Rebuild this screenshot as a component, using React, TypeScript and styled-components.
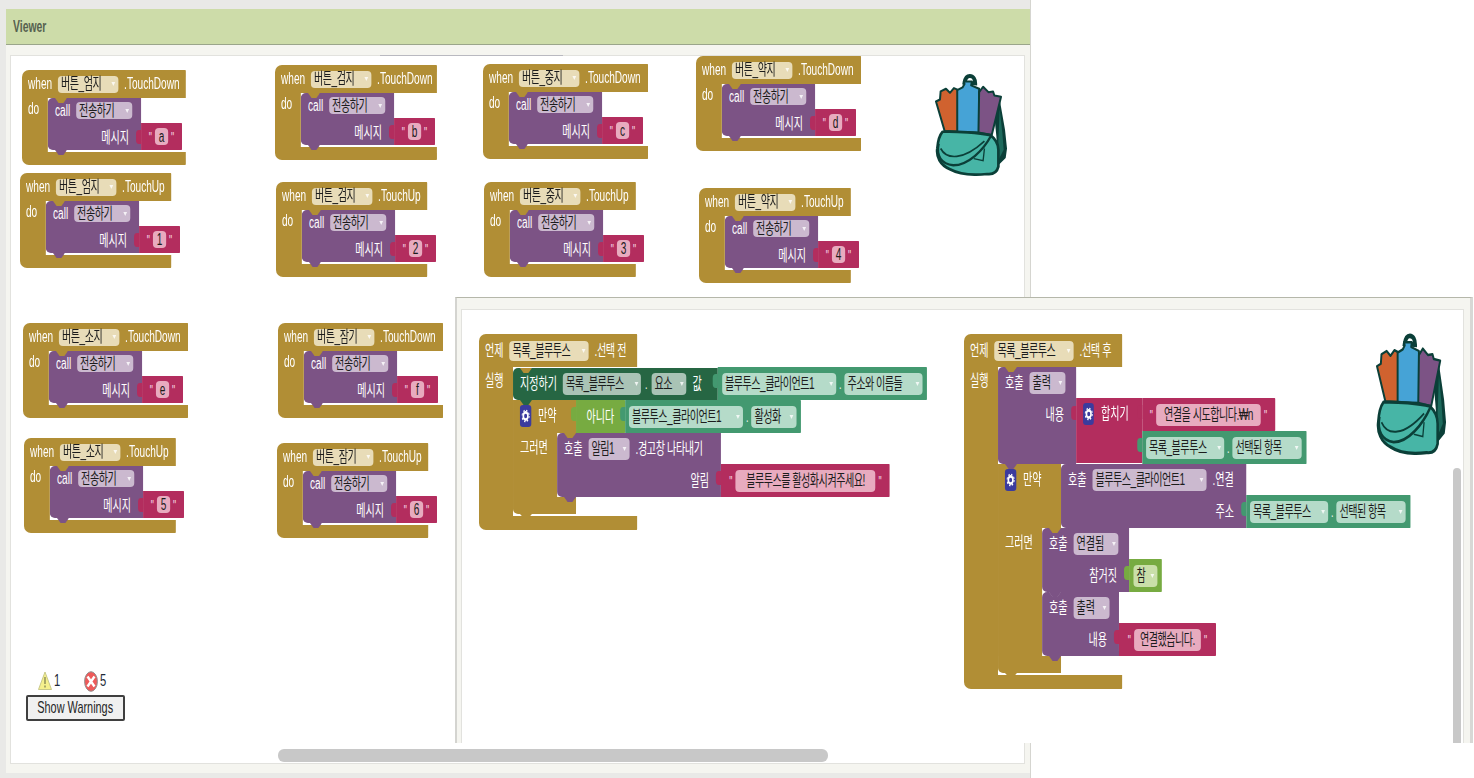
import React from 'react'
import styled, { createGlobalStyle } from 'styled-components'

// the whole reference is squeezed horizontally, blocks get the same squeeze
const K = 0.63
const u = (n: number) => `${n / K}px`

const colors = {
  olive: '#b18e35',
  purple: '#7c5385',
  pink: '#b32d5e',
  setter: '#266643',
  getter: '#439970',
  logic: '#77ab41',
}

const tints: Record<string, string> = {
  olive: '#e8dcb8',
  purple: '#cbb9cf',
  pink: '#e8abbf',
  setter: '#a9c3b5',
  getter: '#b5dbc9',
  logic: '#c9dfa9',
}

const GlobalStyle = createGlobalStyle`
  html, body {
    margin: 0;
    padding: 0;
    background: #fff;
  }
  body {
    font-family: "Liberation Sans", "Noto Sans CJK KR", sans-serif;
  }
`

const Page = styled.div`
  position: relative;
  width: 1474px;
  height: 778px;
  overflow: hidden;
  background: #fff;
  filter: blur(0.45px);
`

const Viewer = styled.section`
  width: 1031px;
  height: 778px;
  box-sizing: border-box;
  padding: 9px 0 5px 6px;
  display: flex;
  flex-direction: column;
  background: #e9e9e7;
  border-right: 1px solid #d5d5d0;
`

const ViewerHeader = styled.header`
  height: 36px;
  flex-shrink: 0;
  display: flex;
  align-items: center;
  padding-left: 7px;
  background: #cddca9;
  border-bottom: 1px solid #9aa58a;
  box-sizing: border-box;
`

const ViewerTitle = styled.span`
  display: inline-block;
  font-size: 16px;
  font-weight: 700;
  color: #566150;
  transform: scaleX(0.65);
  transform-origin: left center;
`

const ViewerPanel = styled.div`
  flex: 1;
  display: flex;
  padding: 10px 5px 9px 4px;
  background: #f5f5f0;
`

const Canvas = styled.div`
  position: relative;
  flex: 1;
  background: #fff;
  border: 1px solid #e2e2de;
`

const TopMark = styled.div`
  position: absolute;
  left: 369px;
  top: -1px;
  width: 183px;
  height: 1px;
  background: #b9b9c0;
`

const HScroll = styled.div`
  position: absolute;
  left: 267px;
  top: 693px;
  width: 550px;
  height: 13px;
  border-radius: 6px;
  background: #c8c8c8;
`

const VScroll = styled.div`
  position: absolute;
  right: 2px;
  top: 158px;
  bottom: 0;
  width: 8px;
  border-radius: 4px 4px 0 0;
  background: #c8c8c8;
`

const WarningBox = styled.div`
  position: absolute;
  left: 15px;
  top: 614px;
  width: 99px;
  display: flex;
  flex-direction: column;
  gap: 3px;
`

const WarningRow = styled.div`
  display: flex;
  align-items: center;
  height: 22px;
  padding-left: 12px;
`

const Count = styled.span<{ $gap: number }>`
  display: inline-block;
  width: ${(p) => p.$gap}px;
  padding-left: 3px;
  box-sizing: border-box;
  font-size: 16px;
  color: #1e2a38;
  transform: scaleX(0.7);
  transform-origin: left center;
`

const WarnButton = styled.button`
  height: 26px;
  padding: 0;
  display: flex;
  align-items: center;
  justify-content: center;
  font: 17px "Liberation Sans", sans-serif;
  color: #262626;
  white-space: nowrap;
  background: #f0f0f0;
  border: 2px solid #3f3f3f;
  border-radius: 2px;
  span {
    display: inline-block;
    transform: scaleX(0.64);
  }
`

const Window = styled.section`
  position: absolute;
  left: 455px;
  top: 297px;
  width: 1018px;
  height: 446px;
  box-sizing: border-box;
  display: flex;
  padding: 11px 6px 0 4px;
  background: #f5f5f0;
  border-top: 1px solid #b5b7aa;
  border-left: 2px solid #d4d4d0;
  border-right: 3px solid #d8d8d5;
`

const WindowCanvas = styled.div`
  position: relative;
  flex: 1;
  background: #fff;
  border: 1px solid #e2e2de;
  border-bottom: 0;
`

const BackpackBox = styled.svg<{ $x: number; $y: number }>`
  position: absolute;
  left: ${(p) => p.$x}px;
  top: ${(p) => p.$y}px;
`

const Hat = styled.article<{ $x: number; $y: number; $w: number }>`
  position: absolute;
  left: ${(p) => p.$x}px;
  top: ${(p) => p.$y}px;
  width: ${(p) => u(p.$w)};
  display: flex;
  flex-direction: column;
  font-size: 16px;
  line-height: 18px;
  color: #fff;
  white-space: nowrap;
  transform: scaleX(${K});
  transform-origin: 0 0;
`

const HatHead = styled.div<{ $h: number }>`
  height: ${(p) => p.$h}px;
  display: flex;
  align-items: center;
  gap: ${u(6)};
  padding-left: ${u(6)};
  background: ${colors.olive};
  border-radius: ${u(7)} 1px 0 0 / 7px 1px 0 0;
`

const HatBody = styled.div`
  display: flex;
  align-items: stretch;
`

const Spine = styled.div<{ $w: number; $top: number }>`
  width: ${(p) => u(p.$w)};
  flex-shrink: 0;
  box-sizing: border-box;
  padding: ${(p) => p.$top}px 0 0 ${u(6)};
  background: ${colors.olive};
`

const Stack = styled.div`
  display: flex;
  flex-direction: column;
  padding-bottom: 2px;
`

const InnerStack = styled(Stack)`
  padding-bottom: 0;
`

const HatFoot = styled.div<{ $h: number }>`
  height: ${(p) => p.$h}px;
  background: ${colors.olive};
  border-radius: 0 0 1px ${u(7)} / 0 0 1px 7px;
`

const Slot = styled.div`
  display: flex;
  align-items: flex-end;
`

const Statement = styled.div<{ $w: number; $bg: string; $notch?: string }>`
  position: relative;
  width: ${(p) => u(p.$w)};
  flex-shrink: 0;
  display: flex;
  flex-direction: column;
  background: ${(p) => p.$bg};
  border-radius: ${u(5)} 0 0 ${u(5)} / 5px 0 0 5px;
  &::before {
    content: '';
    position: absolute;
    left: ${u(7)};
    top: 0;
    width: ${u(12)};
    height: 5px;
    background: ${(p) => p.$notch ?? colors.olive};
    clip-path: polygon(0 0, 100% 0, 70% 100%, 30% 100%);
  }
  &::after {
    content: '';
    position: absolute;
    z-index: 2;
    left: ${u(7)};
    bottom: -5px;
    width: ${u(12)};
    height: 5px;
    background: ${(p) => p.$bg};
    clip-path: polygon(0 0, 100% 0, 70% 100%, 30% 100%);
  }
`

const Row = styled.div<{ $h: number; $end?: boolean; $pad?: number; $drop?: number }>`
  height: ${(p) => p.$h}px;
  flex-shrink: 0;
  box-sizing: border-box;
  display: flex;
  align-items: center;
  justify-content: ${(p) => (p.$end ? 'flex-end' : 'flex-start')};
  gap: ${u(6)};
  padding: ${(p) => p.$drop ?? 0}px ${(p) => u(p.$pad ?? 7)} 0;
`

const Value = styled.div<{ $w: number; $h: number; $bg: string; $center?: boolean }>`
  position: relative;
  width: ${(p) => u(p.$w)};
  height: ${(p) => p.$h}px;
  flex-shrink: 0;
  box-sizing: border-box;
  display: flex;
  align-items: center;
  justify-content: ${(p) => (p.$center ? 'center' : 'flex-start')};
  gap: ${u(3)};
  padding-left: ${(p) => (p.$center ? 0 : u(4))};
  background: ${(p) => p.$bg};
  border-radius: 0 1px 1px 0;
  &::before {
    content: '';
    position: absolute;
    left: ${u(-5)};
    top: 7px;
    width: ${u(5)};
    height: 14px;
    background: ${(p) => p.$bg};
    border-radius: ${u(3)} 0 0 ${u(3)} / 4px 0 0 4px;
  }
`

const Field = styled.span<{ $w: number; $h: number; $tint: string; $caret?: boolean; $tt?: boolean }>`
  width: ${(p) => u(p.$w)};
  height: ${(p) => p.$h}px;
  flex-shrink: 0;
  box-sizing: border-box;
  display: inline-flex;
  align-items: center;
  justify-content: ${(p) => (p.$caret ? 'space-between' : 'center')};
  padding: 0 ${(p) => (p.$caret ? u(3) : 0)};
  color: #1c1c1c;
  letter-spacing: ${(p) => (p.$tt ? '-0.8px' : '0')};
  background: ${(p) => tints[p.$tint]};
  border-radius: ${u(4)} / 4px;
  ${(p) =>
    p.$caret
      ? `&::after {
    content: '';
    width: 0;
    height: 0;
    flex-shrink: 0;
    border-left: ${u(2.5)} solid transparent;
    border-right: ${u(2.5)} solid transparent;
    border-top: 4px solid rgba(255, 255, 255, 0.8);
  }`
      : ''}
`

const Quote = styled.span`
  font-size: 14px;
  color: #f6dbe5;
`

const Dot = styled.span`
  font-size: 14px;
`

const SetterDot = styled(Dot)`
  margin: 0 ${u(-2)};
`

const LooseLabel = styled.span<{ $tt?: boolean }>`
  letter-spacing: ${(p) => (p.$tt ? '-0.6px' : '0')};
`

const IfBlock = styled.div`
  position: relative;
  display: flex;
  flex-direction: column;
`

const IfRow = styled.div`
  display: flex;
  align-items: stretch;
`

const IfCell = styled.div<{ $w: number }>`
  width: ${(p) => u(p.$w)};
  flex-shrink: 0;
  box-sizing: border-box;
  display: flex;
  align-items: flex-start;
  gap: ${u(7)};
  padding: 5px 0 0 ${u(7)};
  line-height: 22px;
  background: ${colors.olive};
`

const ThenCell = styled.div`
  width: ${u(44)};
  flex-shrink: 0;
  box-sizing: border-box;
  padding: 6px 0 0 ${u(7)};
  background: ${colors.olive};
`

const IfFoot = styled.div<{ $w: number }>`
  position: relative;
  width: ${(p) => u(p.$w)};
  height: 17px;
  background: ${colors.olive};
  border-radius: 0 0 0 ${u(5)} / 0 0 0 5px;
  &::after {
    content: '';
    position: absolute;
    left: ${u(7)};
    bottom: -4px;
    width: ${u(12)};
    height: 4px;
    background: ${colors.olive};
    clip-path: polygon(0 0, 100% 0, 70% 100%, 30% 100%);
  }
`

const JoinBlock = styled.div`
  display: flex;
  align-items: flex-start;
`

const JoinCell = styled.div`
  position: relative;
  width: ${u(66)};
  height: 65px;
  flex-shrink: 0;
  box-sizing: border-box;
  display: flex;
  align-items: flex-start;
  gap: ${u(7)};
  padding: 5px 0 0 ${u(7)};
  line-height: 22px;
  background: ${colors.pink};
  &::before {
    content: '';
    position: absolute;
    left: ${u(-5)};
    top: 8px;
    width: ${u(5)};
    height: 14px;
    background: ${colors.pink};
    border-radius: ${u(3)} 0 0 ${u(3)} / 4px 0 0 4px;
  }
`

const JoinSlots = styled.div`
  display: flex;
  flex-direction: column;
  align-items: flex-start;
`

const GearBadge = styled.span`
  width: ${u(11)};
  height: 22px;
  flex-shrink: 0;
  display: inline-flex;
  align-items: center;
  justify-content: center;
  background: #3b3b9e;
  border-radius: ${u(3)} / 3px;
`

const Gear = () => (
  <GearBadge>
    <svg width="14" height="14" viewBox="0 0 13 13">
      <circle cx="6.5" cy="6.5" r="3.4" fill="none" stroke="#fff" strokeWidth="2.4" />
      <circle cx="6.5" cy="6.5" r="5.2" fill="none" stroke="#fff" strokeWidth="1.4" strokeDasharray="2 2.1" />
    </svg>
  </GearBadge>
)

const Backpack = ({ x, y, w, h }: { x: number; y: number; w: number; h: number }) => (
  <BackpackBox $x={x} $y={y} width={w} height={h} viewBox="105 68 220 310" preserveAspectRatio="none">
    <path d="M210 80 C200 80 196 88 194 100 L226 102 C226 90 220 80 210 80 Z" fill="#fff" stroke="#0b3f38" strokeWidth="12" />
    <path d="M280 160 L300 150 L316 240 L322 296 L318 324 L296 346 L290 260 Z" fill="#0b3f38" />
    <path d="M300 180 L308 250 L312 300 L296 330 L296 270 Z" fill="#1d6a5c" />
    <path
      d="M108 156 L120 150 L122 126 L138 118 L150 130 L162 116 L176 122 L176 246 L134 244 Z"
      fill="#d0622f"
      stroke="#0b3f38"
      strokeWidth="6"
      strokeLinejoin="round"
    />
    <path
      d="M172 122 L188 114 L194 104 L192 96 L216 96 L214 108 L238 118 L238 248 L172 246 Z"
      fill="#46a3d6"
      stroke="#0b3f38"
      strokeWidth="6"
      strokeLinejoin="round"
    />
    <path
      d="M238 128 L250 112 L266 128 L280 126 L284 138 L304 142 L276 256 L236 248 Z"
      fill="#7c5385"
      stroke="#0b3f38"
      strokeWidth="6"
      strokeLinejoin="round"
    />
    <path
      d="M128 246 C170 244 240 250 272 256 C288 268 296 280 296 300 L296 350 C292 366 280 374 262 372 C225 376 180 374 150 358 C120 345 108 320 112 295 C114 270 120 255 128 246 Z"
      fill="#47b5a6"
      stroke="#0b3f38"
      strokeWidth="8"
      strokeLinejoin="round"
    />
    <path d="M116 282 C108 318 124 342 160 346 C205 346 250 302 274 258" fill="none" stroke="#0b3f38" strokeWidth="7" />
    <path d="M122 296 C140 330 190 332 254 274" fill="none" stroke="#0b3f38" strokeWidth="5" />
    <path d="M222 326 L250 332 L254 296" fill="none" stroke="#0b3f38" strokeWidth="4" />
  </BackpackBox>
)

const Getter = ({ w, a, aw, b, bw }: { w: number; a: string; aw: number; b: string; bw: number }) => (
  <Value $w={w} $h={33} $bg={colors.getter}>
    <Field $tint="getter" $caret $tt $w={aw} $h={22}>
      {a}
    </Field>
    <Dot>.</Dot>
    <Field $tint="getter" $caret $tt $w={bw} $h={22}>
      {b}
    </Field>
  </Value>
)

const Text = ({ w, fw, children }: { w: number; fw: number; children: React.ReactNode }) => (
  <Value $w={w} $h={33} $bg={colors.pink} $center>
    <Quote>"</Quote>
    <Field $tint="pink" $tt $w={fw} $h={22}>
      {children}
    </Field>
    <Quote>"</Quote>
  </Value>
)

type TouchProps = {
  x: number
  y: number
  w: number
  name: string
  event: string
  msg: string
}

const touchBlocks: TouchProps[] = [
  { x: 22, y: 70, w: 164, name: '버튼_엄지', event: '.TouchDown', msg: 'a' },
  { x: 20, y: 173, w: 151, name: '버튼_엄지', event: '.TouchUp', msg: '1' },
  { x: 275, y: 65, w: 162, name: '버튼_검지', event: '.TouchDown', msg: 'b' },
  { x: 276, y: 182, w: 151, name: '버튼_검지', event: '.TouchUp', msg: '2' },
  { x: 483, y: 64, w: 165, name: '버튼_중지', event: '.TouchDown', msg: 'c' },
  { x: 484, y: 182, w: 152, name: '버튼_중지', event: '.TouchUp', msg: '3' },
  { x: 696, y: 56, w: 165, name: '버튼_약지', event: '.TouchDown', msg: 'd' },
  { x: 699, y: 188, w: 152, name: '버튼_약지', event: '.TouchUp', msg: '4' },
  { x: 23, y: 323, w: 165, name: '버튼_소지', event: '.TouchDown', msg: 'e' },
  { x: 24, y: 438, w: 152, name: '버튼_소지', event: '.TouchUp', msg: '5' },
  { x: 278, y: 323, w: 165, name: '버튼_잠기', event: '.TouchDown', msg: 'f' },
  { x: 277, y: 443, w: 151, name: '버튼_잠기', event: '.TouchUp', msg: '6' },
]

const TouchBlock = ({ x, y, w, name, event, msg }: TouchProps) => (
  <Hat $x={x - 11} $y={y - 56} $w={w}>
    <HatHead $h={28}>
      <span>when</span>
      <Field $tint="olive" $caret $tt $w={60} $h={17}>
        {name}
      </Field>
      <span>{event}</span>
    </HatHead>
    <HatBody>
      <Spine $w={26} $top={2}>
        do
      </Spine>
      <Stack>
        <Slot>
          <Statement $w={93} $bg={colors.purple}>
            <Row $h={25}>
              <span>call</span>
              <Field $tint="purple" $caret $tt $w={56} $h={17}>
                전송하기
              </Field>
            </Row>
            <Row $h={27} $end $pad={12} $drop={2}>
              메시지
            </Row>
          </Statement>
          <Value $w={41} $h={27} $bg={colors.pink} $center>
            <Quote>"</Quote>
            <Field $tint="pink" $w={13} $h={17}>
              {msg}
            </Field>
            <Quote>"</Quote>
          </Value>
        </Slot>
      </Stack>
    </HatBody>
    <HatFoot $h={13} />
  </Hat>
)

const BeforePick = () => (
  <Hat $x={17} $y={24} $w={158}>
    <HatHead $h={33}>
      <LooseLabel>언제</LooseLabel>
      <Field $tint="olive" $caret $tt $w={79} $h={20}>
        목록_블루투스
      </Field>
      <LooseLabel $tt>.선택 전</LooseLabel>
    </HatHead>
    <HatBody>
      <Spine $w={34} $top={5}>
        실행
      </Spine>
      <Stack>
        <Slot>
          <Statement $w={205} $bg={colors.setter}>
            <Row $h={32}>
              <LooseLabel>지정하기</LooseLabel>
              <Field $tint="setter" $caret $tt $w={78} $h={22}>
                목록_블루투스
              </Field>
              <SetterDot>.</SetterDot>
              <Field $tint="setter" $caret $tt $w={35} $h={22}>
                요소
              </Field>
              <span>값</span>
            </Row>
          </Statement>
          <Getter w={209} a="블루투스_클라이언트1" aw={114} b="주소와 이름들" bw={78} />
        </Slot>
        <IfBlock>
          <IfRow>
            <IfCell $w={63}>
              <Gear />
              <span>만약</span>
            </IfCell>
            <Value $w={49} $h={33} $bg={colors.logic} $center>
              아니다
            </Value>
            <Getter w={176} a="블루투스_클라이언트1" aw={114} b="활성화" bw={45} />
          </IfRow>
          <IfRow>
            <ThenCell>그러면</ThenCell>
            <Slot>
              <Statement $w={164} $bg={colors.purple}>
                <Row $h={32}>
                  <span>호출</span>
                  <Field $tint="purple" $caret $tt $w={41} $h={22}>
                    알림1
                  </Field>
                  <LooseLabel $tt>.경고창 나타내기</LooseLabel>
                </Row>
                <Row $h={32} $end $pad={12}>
                  알림
                </Row>
              </Statement>
              <Text w={169} fw={140}>
                블루투스를 활성화시켜주세요!
              </Text>
            </Slot>
          </IfRow>
          <IfFoot $w={63} />
        </IfBlock>
      </Stack>
    </HatBody>
    <HatFoot $h={14} />
  </Hat>
)

const AfterPick = () => (
  <Hat $x={502} $y={24} $w={158}>
    <HatHead $h={33}>
      <LooseLabel>언제</LooseLabel>
      <Field $tint="olive" $caret $tt $w={79} $h={20}>
        목록_블루투스
      </Field>
      <LooseLabel $tt>.선택 후</LooseLabel>
    </HatHead>
    <HatBody>
      <Spine $w={34} $top={5}>
        실행
      </Spine>
      <Stack>
        <Slot>
          <Statement $w={78} $bg={colors.purple}>
            <Row $h={32}>
              <span>호출</span>
              <Field $tint="purple" $caret $w={36} $h={22}>
                출력
              </Field>
            </Row>
            <Row $h={32} $end $pad={12}>
              내용
            </Row>
            <Row $h={33} />
          </Statement>
          <JoinBlock>
            <JoinCell>
              <Gear />
              <span>합치기</span>
            </JoinCell>
            <JoinSlots>
              <Text w={133} fw={105}>
                연결을 시도합니다.₩n
              </Text>
              <Getter w={165} a="목록_블루투스" aw={78} b="선택된 항목" bw={69} />
            </JoinSlots>
          </JoinBlock>
        </Slot>
        <IfBlock>
          <IfRow>
            <IfCell $w={63}>
              <Gear />
              <span>만약</span>
            </IfCell>
            <Slot>
              <Statement $w={185} $bg={colors.purple} $notch={colors.purple}>
                <Row $h={32}>
                  <span>호출</span>
                  <Field $tint="purple" $caret $tt $w={114} $h={22}>
                    블루투스_클라이언트1
                  </Field>
                  <LooseLabel>.연결</LooseLabel>
                </Row>
                <Row $h={32} $end $pad={12}>
                  주소
                </Row>
              </Statement>
              <Getter w={165} a="목록_블루투스" aw={78} b="선택된 항목" bw={69} />
            </Slot>
          </IfRow>
          <IfRow>
            <ThenCell>그러면</ThenCell>
            <InnerStack>
              <Slot>
                <Statement $w={87} $bg={colors.purple}>
                  <Row $h={32}>
                    <span>호출</span>
                    <Field $tint="purple" $caret $w={45} $h={22}>
                      연결됨
                    </Field>
                  </Row>
                  <Row $h={32} $end $pad={12}>
                    참거짓
                  </Row>
                </Statement>
                <Value $w={33} $h={33} $bg={colors.logic} $center>
                  <Field $tint="logic" $caret $w={24} $h={22}>
                    참
                  </Field>
                </Value>
              </Slot>
              <Slot>
                <Statement $w={77} $bg={colors.purple} $notch="#a98fb0">
                  <Row $h={32}>
                    <span>호출</span>
                    <Field $tint="purple" $caret $w={36} $h={22}>
                      출력
                    </Field>
                  </Row>
                  <Row $h={32} $end $pad={12}>
                    내용
                  </Row>
                </Statement>
                <Text w={97} fw={67}>
                  연결했습니다.
                </Text>
              </Slot>
            </InnerStack>
          </IfRow>
          <IfFoot $w={63} />
        </IfBlock>
      </Stack>
    </HatBody>
    <HatFoot $h={14} />
  </Hat>
)

const App: React.FC = () => (
  <>
    <GlobalStyle />
    <Page>
      <Viewer>
        <ViewerHeader>
          <ViewerTitle>Viewer</ViewerTitle>
        </ViewerHeader>
        <ViewerPanel>
          <Canvas>
            <TopMark />
            {touchBlocks.map((b) => (
              <TouchBlock key={b.name + b.event} {...b} />
            ))}
            <Backpack x={924} y={16} w={73} h={104} />
            <WarningBox>
              <WarningRow>
                <svg width="14" height="20" viewBox="0 0 14 20" preserveAspectRatio="none">
                  <path d="M7 1 L13.5 18.5 H0.5 Z" fill="#f5f08c" stroke="#c9c98a" strokeWidth="1" strokeLinejoin="round" />
                  <path d="M7 6 V13 M7 14.5 V16.5" stroke="#8a8a55" strokeWidth="1.4" />
                </svg>
                <Count $gap={32}>1</Count>
                <svg width="14" height="21" viewBox="0 0 14 21" preserveAspectRatio="none">
                  <ellipse cx="7" cy="10.5" rx="6.4" ry="9.8" fill="#ee5a5a" stroke="#8f8f8f" strokeWidth="1" />
                  <path d="M3.5 5.5 L10.5 15.5 M10.5 5.5 L3.5 15.5" stroke="#fff" strokeWidth="2.4" />
                </svg>
                <Count $gap={20}>5</Count>
              </WarningRow>
              <WarnButton>
                <span>Show Warnings</span>
              </WarnButton>
            </WarningBox>
            <HScroll />
          </Canvas>
        </ViewerPanel>
      </Viewer>
      <Window>
        <WindowCanvas>
          <BeforePick />
          <AfterPick />
          <Backpack x={914} y={21} w={71} h={124} />
          <VScroll />
        </WindowCanvas>
      </Window>
    </Page>
  </>
)

export default App
